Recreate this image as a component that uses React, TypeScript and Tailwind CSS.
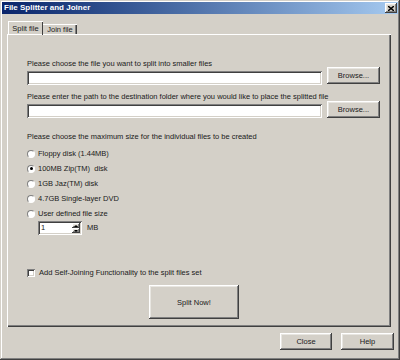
import { useState } from 'react';

const raised =
  'shadow-[inset_-1px_-1px_0_#404040,inset_1px_1px_0_#ffffff,inset_-2px_-2px_0_#808080,inset_2px_2px_0_#e8e6e1]';
const sunken =
  'shadow-[inset_1px_1px_0_#808080,inset_-1px_-1px_0_#ffffff,inset_2px_2px_0_#404040,inset_-2px_-2px_0_#d4d0c8]';

function WinButton({ label, className }: { label: string; className: string }) {
  return (
    <button className={`flex items-center justify-center bg-[#d4d0c8] text-[#1a1a1a] ${raised} ${className}`}>
      {label}
    </button>
  );
}

function Radio({ checked }: { checked: boolean }) {
  return (
    <span className="flex h-[8px] w-[8px] items-center justify-center rounded-full border border-t-[#808080] border-l-[#808080] border-r-[#ffffff] border-b-[#ffffff] bg-white">
      {checked && <span className="h-[3px] w-[3px] rounded-full bg-black" />}
    </span>
  );
}

const sizes = [
  'Floppy disk (1.44MB)',
  '100MB Zip(TM)  disk',
  '1GB Jaz(TM) disk',
  '4.7GB Single-layer DVD',
  'User defined file size',
];

export default function App() {
  const [selected, setSelected] = useState(1);

  return (
    <div
      className="flex h-[360px] w-[400px] flex-col bg-[#d4d0c8] p-[2px] text-[7.5px] text-[#1a1a1a] shadow-[inset_-1px_-1px_0_#404040,inset_1px_1px_0_#d4d0c8,inset_-2px_-2px_0_#808080,inset_2px_2px_0_#ffffff]"
      style={{ fontFamily: "'Liberation Sans', Arial, sans-serif" }}
    >
      {/* Title bar */}
      <div className="flex h-[12px] items-center justify-between bg-gradient-to-r from-[#0a246a] to-[#a6caf0] pl-[2px] pr-[1px]">
        <span className="text-[8px] font-bold text-white">File Splitter and Joiner</span>
        <button className={`flex h-[10px] w-[12px] items-center justify-center bg-[#d4d0c8] ${raised}`}>
          <svg width="6" height="5" viewBox="0 0 6 5">
            <path d="M0 0 L6 5 M6 0 L0 5" stroke="#000" strokeWidth="1.4" />
          </svg>
        </button>
      </div>

      {/* Tabs */}
      <div className="ml-[6px] mt-[7px] flex items-end">
        <div className="relative z-10 flex h-[14px] w-[35px] items-center justify-center border-l border-t border-white pr-[1px] shadow-[inset_-1px_0_0_#404040]">
          Split file
        </div>
        <div className="flex h-[11px] w-[34px] items-center justify-center border-t border-white shadow-[inset_-1px_0_0_#404040,inset_-2px_0_0_#808080]">
          Join file
        </div>
      </div>

      {/* Panel */}
      <div className="-mt-[1px] ml-[5px] mr-[7px] flex h-[293px] flex-col border-l border-t border-white pl-[19px] shadow-[inset_-1px_-1px_0_#404040,inset_-2px_-2px_0_#808080]">
        <div className="mt-[26px] h-[6px] leading-[6px]">Please choose the file you want to split into smaller files</div>
        <div className="flex items-start">
          <div className={`mt-[4px] h-[14px] w-[295px] bg-white ${sunken}`} />
          <WinButton label="Browse..." className="ml-[5px] h-[17px] w-[53px]" />
        </div>

        <div className="mt-[9px] h-[6px] leading-[6px]">
          Please enter the path to the destination folder where you would like to place the splitted file
        </div>
        <div className="mt-[1px] flex items-start">
          <div className={`mt-[3px] h-[14px] w-[295px] bg-white ${sunken}`} />
          <WinButton label="Browse..." className="ml-[5px] h-[17px] w-[53px]" />
        </div>

        <div className="mt-[16px] h-[6px] leading-[6px]">
          Please choose the maximum size for the individual files to be created
        </div>

        <div className="mt-[6px] flex flex-col">
          {sizes.map((s, i) => (
            <div key={s} className="flex h-[15px] items-center gap-[3px]" onClick={() => setSelected(i)}>
              <Radio checked={selected === i} />
              <span className="whitespace-pre">{s}</span>
            </div>
          ))}
        </div>

        <div className="ml-[11px] flex items-center gap-[5px]">
          <div className={`flex h-[14px] w-[44px] items-center bg-white p-[2px] ${sunken}`}>
            <span className="flex-1 pl-[1px]">1</span>
            <div className="flex h-full w-[8px] flex-col">
              <div className={`flex flex-1 items-center justify-center bg-[#d4d0c8] ${raised}`}>
                <svg width="4" height="2" viewBox="0 0 4 2">
                  <path d="M0 2 L2 0 L4 2 Z" fill="#000" />
                </svg>
              </div>
              <div className={`flex flex-1 items-center justify-center bg-[#d4d0c8] ${raised}`}>
                <svg width="4" height="2" viewBox="0 0 4 2">
                  <path d="M0 0 L2 2 L4 0 Z" fill="#000" />
                </svg>
              </div>
            </div>
          </div>
          <span>MB</span>
        </div>

        <div className="mt-[32px] flex items-center gap-[4px]">
          <span className={`h-[8px] w-[8px] bg-white ${sunken}`} />
          <span>Add Self-Joining Functionality to the split files set</span>
        </div>

        <WinButton label="Split Now!" className="ml-[122px] mt-[7px] h-[34px] w-[90px]" />
      </div>

      {/* Bottom buttons */}
      <div className="mr-[4px] mt-[6px] flex justify-end gap-[9px]">
        <WinButton label="Close" className="h-[17px] w-[52px]" />
        <WinButton label="Help" className="h-[17px] w-[53px]" />
      </div>
    </div>
  );
}
